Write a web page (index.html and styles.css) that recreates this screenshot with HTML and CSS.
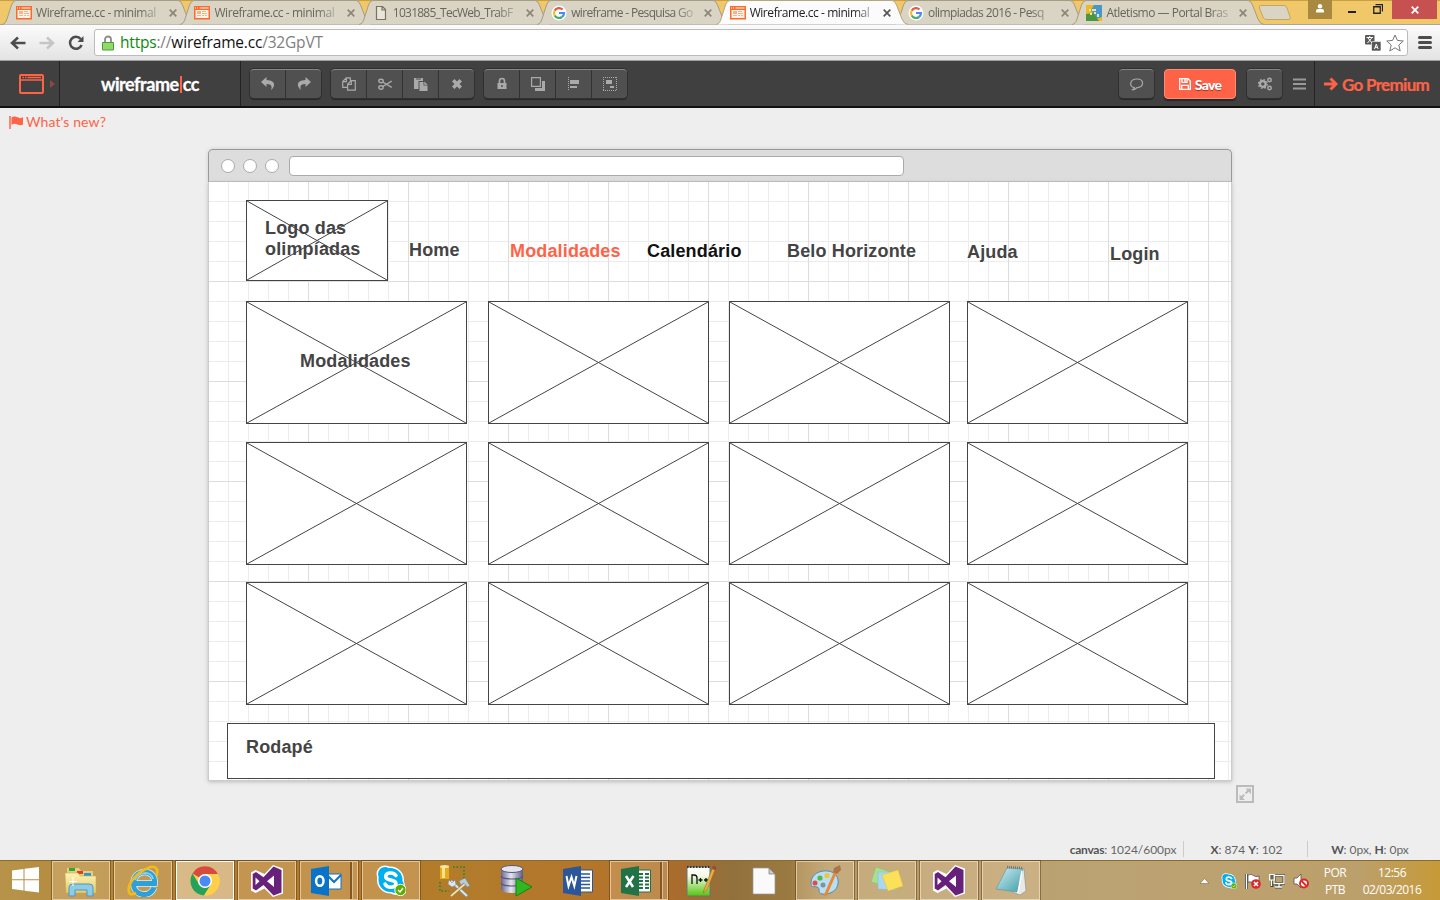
FILE: index.html
```html
<!DOCTYPE html>
<html lang="pt-BR">
<head>
<meta charset="utf-8">
<title>Wireframe.cc - minimal wireframing tool</title>
<link rel="stylesheet" href="styles.css">
</head>
<body>
<svg class="defs" width="0" height="0" aria-hidden="true">
  <defs>
    <linearGradient id="yel" x1="0" y1="0" x2="0" y2="1"><stop offset="0" stop-color="#fdf3b8"/><stop offset="1" stop-color="#e5cb62"/></linearGradient>
    <linearGradient id="blu" x1="0" y1="0" x2="0" y2="1"><stop offset="0" stop-color="#a8e6fb"/><stop offset="1" stop-color="#2a93cf"/></linearGradient>
    <linearGradient id="cyl" x1="0" y1="0" x2="1" y2="0"><stop offset="0" stop-color="#66678d"/><stop offset=".45" stop-color="#e6e6f2"/><stop offset="1" stop-color="#5b5c82"/></linearGradient>
    <linearGradient id="grn" x1="0" y1="0" x2="0" y2="1"><stop offset="0" stop-color="#fff"/><stop offset=".3" stop-color="#f4fbe8"/><stop offset="1" stop-color="#54c40c"/></linearGradient>
    <linearGradient id="pad" x1="0" y1="0" x2="1" y2="1"><stop offset="0" stop-color="#d5eef1"/><stop offset="1" stop-color="#3c9eab"/></linearGradient>
  </defs>
  <symbol id="tab-shape" viewBox="0 0 192 25"><path d="M0 24.5C3 24 4 22 5 19L9.5 5Q11 .5 14 .5H176Q179 .5 180.500 5L186 19Q188 24 192 24.500"/></symbol>
  <symbol id="fav-wire" viewBox="0 0 16 14"><path d="M0 0H16V13.500H0Z" fill="#ff6a2b"/><path d="M1.500 4H14.500V12H1.500Z" fill="#fff3ea"/><path d="M1 1.500h1v1H1zm2 0h1v1H3zm2.500 0H14.500v1h-9z" fill="#fff"/><path d="M3 5h4v3H3zM3 9h4v1H3zm5-4h4v1H8zm0 2h5v1H8zm0 2h2v1H8zm3 0h2v1h-2z" fill="#ffb184"/></symbol>
  <symbol id="fav-google" viewBox="0 0 16 16"><circle cx="8" cy="8" r="7.500" fill="#fff"/><g fill="none" stroke-width="2.200"><path d="M11.500 4.500A5 5 0 0 0 3.700 5.600" stroke="#ea5546"/><path d="M3.700 5.500A5 5 0 0 0 3.700 10.500" stroke="#f5bd24"/><path d="M3.700 10.500A5 5 0 0 0 11 12" stroke="#4aac63"/><path d="M11 12A5 5 0 0 0 13 8H8" stroke="#4b8bf4"/></g></symbol>
  <symbol id="close" viewBox="0 0 8 8"><path d="M.7.7 7.300 7.300M7.300.7.7 7.300" stroke="currentColor" stroke-width="1.700"/></symbol>
  <symbol id="box-cross" viewBox="0 0 219 121"><path d="M0 0 219 121M219 0 0 121" stroke="#444" stroke-width="1" fill="none"/></symbol>
  <symbol id="vs" viewBox="0 0 32 32"><path d="M22 0 32 3.500V28.500L22 32 13.500 23.500 4.500 28 0 25.500V7.500L4.500 5 13.500 9Z" fill="#fff"/><path d="M22.500 1.500 30.500 5V27.500L22.500 30.500 12.500 20 5 25.500 1.700 23.500V9L5 7 12.500 12.300Z" fill="#68217a"/><path d="M4.500 12.500V20L8.500 16.300ZM23 10.500V22L16 16.300Z" fill="#fff"/></symbol>
  <symbol id="skype" viewBox="0 0 30 31"><circle cx="9" cy="9" r="8.500" fill="#fff"/><circle cx="20" cy="21" r="9" fill="#fff"/><circle cx="14.500" cy="15" r="13.500" fill="#fff"/><circle cx="9" cy="9" r="7" fill="#00aff0"/><circle cx="20" cy="20.500" r="7.800" fill="#00aff0"/><circle cx="14.500" cy="15" r="12" fill="#00aff0"/><path d="M20 10.500Q18 7.500 13.500 8C9 8.500 8.500 13 12 14.300L17 15.700C22 17.500 20 22.300 15 22.300Q10.500 22.300 9 19" fill="none" stroke="#fff" stroke-width="3.500" stroke-linecap="round"/><circle cx="24.500" cy="25" r="5.700" fill="#5db000" stroke="#fff"/><path d="m22 25 2 2 3-4" stroke="#fff" fill="none" stroke-width="1.300"/></symbol>
</svg>

<header class="tabs">
  <div class="tab"><svg class="shape"><use href="#tab-shape"/></svg><svg class="fav"><use href="#fav-wire"/></svg><span class="title">Wireframe.cc - minimal</span><svg class="x"><use href="#close"/></svg></div>
  <div class="tab"><svg class="shape"><use href="#tab-shape"/></svg><svg class="fav"><use href="#fav-wire"/></svg><span class="title">Wireframe.cc - minimal</span><svg class="x"><use href="#close"/></svg></div>
  <div class="tab"><svg class="shape"><use href="#tab-shape"/></svg><svg class="fav" viewBox="0 0 16 16"><path d="M3.500 1.500h6l3 3v10h-9zM9 1.500V5h3.500" fill="#e9e5d8" stroke="#777263" stroke-width="1.200"/></svg><span class="title tight">1031885_TecWeb_TrabF</span><svg class="x"><use href="#close"/></svg></div>
  <div class="tab"><svg class="shape"><use href="#tab-shape"/></svg><svg class="fav"><use href="#fav-google"/></svg><span class="title google">wireframe - Pesquisa Go</span><svg class="x"><use href="#close"/></svg></div>
  <div class="tab active"><svg class="shape"><use href="#tab-shape"/></svg><svg class="fav"><use href="#fav-wire"/></svg><span class="title">Wireframe.cc - minimal</span><svg class="x"><use href="#close"/></svg></div>
  <div class="tab"><svg class="shape"><use href="#tab-shape"/></svg><svg class="fav"><use href="#fav-google"/></svg><span class="title olimp">olimpiadas 2016 - Pesq</span><svg class="x"><use href="#close"/></svg></div>
  <div class="tab"><svg class="shape"><use href="#tab-shape"/></svg><svg class="fav" viewBox="0 0 16 16"><path d="M0 0H16V16H0z" fill="#f0b91f"/><path d="M16 0V12L10 14 5 5 8 0z" fill="#4996c8"/><path d="M0 16V9L7 8 13 16z" fill="#4b9540"/><path d="M3 4h2v2H3zm3 0h4v2H6zm-2 4h2v2H4zm4-1h2v2H8zm3 2h2v3h-2z" fill="#e9e9a5"/></svg><span class="title portal">Atletismo — Portal Bras</span><svg class="x"><use href="#close"/></svg></div>
  <svg class="newtab" viewBox="0 0 34 18"><path d="M3 1.500H26Q28 1.500 29 4L32 12.500Q33 15.500 31 15.500H8Q6 15.500 5 13L1.500 4Q.5 1.500 3 1.500Z" fill="#d9d4c3" stroke="#c2a764"/></svg>
  <div class="winbtns">
    <span class="user"><svg width="10" height="9" viewBox="0 0 10 9"><circle cx="5" cy="2.200" r="2.200" fill="#fff"/><path d="M1 8.500V6.500Q1 5 3 5H7Q9 5 9 6.500V8.500z" fill="#fff"/></svg></span>
    <svg class="min" width="8" height="2"><path d="M0 0H8V2H0z" fill="#222"/></svg>
    <svg class="max" width="10" height="10" viewBox="0 0 10 10"><path d="M.75 2.750h6.500v6.500H.75zM2.500.5H9.500V7.500" fill="none" stroke="#222" stroke-width="1.300"/></svg>
    <span class="quit"><svg width="8" height="8"><use href="#close"/></svg></span>
  </div>
</header>

<div class="nav">
  <svg class="back" viewBox="0 0 16 14"><path d="M8 1.500 2 7 8 12.500M2 7H15.500" fill="none" stroke="#4c4c4c" stroke-width="2.500"/></svg>
  <svg class="fwd" viewBox="0 0 16 14"><path d="M8 1.500 14 7 8 12.500M14 7H.5" fill="none" stroke="#c5c5c5" stroke-width="2.500"/></svg>
  <svg class="reload" viewBox="0 0 16 16"><path d="M12.700 4A6 6 0 1 0 13.600 10" fill="none" stroke="#4c4c4c" stroke-width="2.500"/><path d="M15.500 1V7H9.500z" fill="#4c4c4c"/></svg>
  <div class="url">
    <svg class="lock" viewBox="0 0 12 16"><path d="M3 8V4.500a3 3 0 0 1 6 0V8" fill="none" stroke="#8c8c8c" stroke-width="1.800"/><path d="M.5 7.500h11v7.500H.5z" fill="#91da68" stroke="#4b9f38"/></svg>
    <span class="address"><span class="secure">https</span>://<span class="host">wireframe.cc</span>/32GpVT</span>
    <svg class="translate" viewBox="0 0 16 16"><rect width="9.500" height="9.500" rx="1" fill="#595959"/><rect x="6.500" y="6.500" width="9.500" height="9.500" rx="1" fill="#595959" stroke="#fff" stroke-width=".6"/><path d="M1.500 2.500H8M4.700 1v1.500M3 3 7 8M6.700 3 2.500 8M9.500 14l1.800-5 1.800 5M10 12.300h2.600" stroke="#fff" stroke-width="1" fill="none"/></svg>
    <svg class="star" viewBox="0 0 18 18"><path d="M9 1 11.400 6.400 17.300 7 12.800 11 14.200 17 9 13.800 3.800 17 5.200 11 .7 7 6.600 6.400Z" fill="#fff" stroke="#777" stroke-width="1"/></svg>
  </div>
  <svg class="menu" viewBox="0 0 13 13"><path d="M1 1.500H12M1 6.500H12M1 11.500H12" stroke="#4c4c4c" stroke-width="3" stroke-linecap="round"/></svg>
</div>

<div class="toolbar">
  <div class="device">
    <svg width="25" height="20" viewBox="0 0 25 20"><rect x="1" y="1" width="23" height="18" rx="1" fill="none" stroke="#ff6347" stroke-width="2"/><path d="M1 6H24M3.500 3.500h1.500M6 3.500h1.500M8.500 3.500H22" stroke="#ff6347" stroke-width="1.300"/></svg>
    <svg width="5" height="8"><path d="M0 0 5 4 0 8z" fill="#8b4a3e"/></svg>
  </div>
  <div class="brand">wireframe<i></i>cc</div>
  <div class="group g1">
    <span><svg viewBox="0 0 14 14"><path d="M5.500 0 0 5 5.500 10V7C9 6.800 11.800 8 10 13 15.500 8 13.500 3.300 5.500 3z"/></svg></span>
    <span><svg viewBox="0 0 14 14"><path d="M8.500 0 14 5 8.500 10V7C5 6.800 2.200 8 4 13-1.500 8 .5 3.300 8.500 3z"/></svg></span>
  </div>
  <div class="group g2">
    <span><svg viewBox="0 0 14 14"><path d="M5 10.300H.7V4.500L4.300.9H8.300V3.500M.7 4.600H4.400V.9M5.600 7.200 9.200 3.600H13.300V13.200H5.600zM5.600 7.300H9.300V3.600" fill="none" stroke="#aaa" stroke-width="1.200"/></svg></span>
    <span><svg viewBox="0 0 14 14"><g fill="none" stroke="#aaa" stroke-width="1.400"><ellipse cx="3" cy="4" rx="2.200" ry="1.700"/><ellipse cx="3" cy="10.500" rx="2.200" ry="1.700"/><path d="M4.700 5 13.700 10.500M4.700 9.500 13.700 4"/></g></svg></span>
    <span><svg viewBox="0 0 14 14"><path d="M0 1H9V4H4.500V12H0zM5.500 5H9.500V8.500H13.500V14H5.500zM10.300 4.500 13.700 7.700H10.300z"/><path d="M2 2h5" stroke="#505050"/></svg></span>
    <span><svg viewBox="0 0 14 14"><path d="m2 4.500 2.500-2.500L7 4.500 9.500 2 12 4.500 9.500 7 12 9.500 9.500 12 7 9.500 4.500 12 2 9.500 4.500 7z"/></svg></span>
  </div>
  <div class="group g3">
    <span><svg viewBox="0 0 14 14"><path d="M4.500 7V4a2.500 2.500 0 0 1 5 0V7" fill="none" stroke="#aaa" stroke-width="1.700"/><path d="M2.500 6h9v6h-9z"/><path d="M7 8v2" stroke="#505050" stroke-width="1.500"/></svg></span>
    <span><svg viewBox="0 0 14 14"><path d="M.6.6h8.800v8.800H.6z" fill="none" stroke="#aaa" stroke-width="1.200"/><path d="M11 4h3v10H4v-3h7z"/></svg></span>
    <span><svg viewBox="0 0 14 14"><path d="M1.500 0v14" stroke="#aaa" stroke-dasharray="1 1"/><path d="M3 3h9v4H3zm0 6h7v2H3z"/></svg></span>
    <span><svg viewBox="0 0 14 14"><path d="M.5 0V14M13.500 0V14M0 .5H14M0 13.500H14" fill="none" stroke="#aaa" stroke-dasharray="1 1"/><path d="M3 3h6v4H3zm4 6h4v2H7z"/></svg></span>
  </div>
  <div class="group solo"><span><svg viewBox="0 0 14 14"><path d="M4.300 10.700C-1.500 9 0 2 7 2S15 9.800 6.500 10.800C5.500 12.300 3 13 2.500 12.700Q4.200 12 4.300 10.700Z" fill="none" stroke="#aaa" stroke-width="1.200"/></svg></span></div>
  <div class="save"><svg width="12" height="12" viewBox="0 0 12 12"><path d="M.7.7H9L11.300 3V11.300H.7zM3 .7V4.300H8V.7M2.700 11.300V7.300H9.300V11.300M6 1v3" fill="none" stroke="#fff" stroke-width="1.300"/></svg>Save</div>
  <div class="group solo gears"><span><svg viewBox="0 0 14 14"><g fill="none" stroke="#aaa"><circle cx="4.800" cy="7" r="2.800" stroke-width="2.200"/><circle cx="4.800" cy="7" r="4.300" stroke-dasharray="1.700 1.680" stroke-width="1.500"/><circle cx="11.500" cy="3" r="1.700" stroke-width="1.500"/><circle cx="11.500" cy="11" r="1.700" stroke-width="1.500"/></g></svg></span></div>
  <svg class="burger" width="13" height="12"><path d="M0 1.500H13M0 6H13M0 10.500H13" stroke="#999" stroke-width="1.800"/></svg>
  <div class="premium"><svg width="14" height="14" viewBox="0 0 14 14"><path d="M0 7H12M6.500 1.500 12 7 6.500 12.500" fill="none" stroke="#ff6347" stroke-width="3"/></svg>Go Premium</div>
</div>

<main class="workspace">
  <div class="whatsnew"><svg width="15" height="13" viewBox="0 0 15 13"><path d="M1 0V13" stroke="#ff6347" stroke-width="1.500"/><path d="M2.500 1.500Q5.500-.5 8.500 1.300T14 1V8.500Q11.500 10 8.500 8.500T2.500 9z" fill="#ff6347"/></svg>What's new?</div>
  <div class="window">
    <div class="titlebar"><i></i><i></i><i></i><b></b></div>
    <div class="canvas">
      <div class="logo box"><svg viewBox="0 0 140 79"><path d="M0 0 140 79M140 0 0 79" stroke="#444" fill="none"/></svg></div>
      <span class="label logo-label">Logo das<br>olimpíadas</span>
      <span class="label home">Home</span>
      <span class="label modalidades">Modalidades</span>
      <span class="label calendario">Calendário</span>
      <span class="label belo">Belo Horizonte</span>
      <span class="label ajuda">Ajuda</span>
      <span class="label login">Login</span>
      <div class="cards">
        <div class="box"><svg><use href="#box-cross"/></svg></div><div class="box"><svg><use href="#box-cross"/></svg></div><div class="box"><svg><use href="#box-cross"/></svg></div><div class="box"><svg><use href="#box-cross"/></svg></div>
        <div class="box"><svg><use href="#box-cross"/></svg></div><div class="box"><svg><use href="#box-cross"/></svg></div><div class="box"><svg><use href="#box-cross"/></svg></div><div class="box"><svg><use href="#box-cross"/></svg></div>
        <div class="box"><svg><use href="#box-cross"/></svg></div><div class="box"><svg><use href="#box-cross"/></svg></div><div class="box"><svg><use href="#box-cross"/></svg></div><div class="box"><svg><use href="#box-cross"/></svg></div>
      </div>
      <span class="label card-label">Modalidades</span>
      <div class="footer-box box"></div>
      <span class="label rodape">Rodapé</span>
    </div>
    <svg class="resize" viewBox="0 0 18 18"><rect x="1" y="1" width="16" height="16" fill="none" stroke="#bbb" stroke-width="2"/><path d="M9.500 3.500H15V9zM3.500 9.500V15H9z" fill="#bbb"/><path d="M5 13 13 5" stroke="#bbb" stroke-width="2" stroke-dasharray="4.500 2"/></svg>
  </div>
  <div class="status"><span class="s1"><b>canvas</b>: 1024/600px</span><span class="s2"><b>X</b>: 874 <b>Y</b>: 102</span><span class="s3"><b>W</b>: 0px, <b>H</b>: 0px</span></div>
</main>

<footer class="taskbar">
  <div class="start"><svg width="28" height="26" viewBox="0 0 28 26"><path d="M0 3.500 11.500 2V12.300H0zM12.500 1.800 27 0V12.300H12.500zM0 13.300H11.500V23.500L0 22zM12.500 13.300H27V25.500L12.500 23.700z" fill="#fff"/></svg></div>
  <div class="task open"><svg width="34" height="32" viewBox="0 0 34 32"><path d="M3 3h12l2 3h12v19H3z" fill="#e8cf77"/><path d="M5 3h6v3H5z" fill="#2ca93c"/><path d="M13 6h6v3h-6z" fill="#d8402c"/><path d="M20 8h7v3h-7z" fill="#2b98d6"/><path d="M1 8h13l2 3h16V28H2z" fill="url(#yel)" stroke="#c9ad55" stroke-width=".6"/><path d="M5 31V22q0-3 4-3H25q4 0 4 3v9h-6V25H11v6z" fill="#8ecbe6" stroke="#4b99c4"/><path d="M9 12v9M5 16.500h8" stroke="#fff"/></svg></div>
  <div class="task open"><svg width="34" height="32" viewBox="0 0 34 32"><path d="M7 18.500H28.500C30 4 10 3 7.500 16.500 6 31 24 34 28 22.500" fill="none" stroke="#d8f2fb" stroke-width="6.500"/><path d="M7 18.500H28.500C30 4 10 3 7.500 16.500 6 31 24 34 28 22.500" fill="none" stroke="#2f9fd8" stroke-width="5"/><path d="M27 14C26 6 12 6 9 15" fill="none" stroke="#7fd4f4" stroke-width="2"/><path d="M30.500 11C33 3 29-1 20 4 9 9 1 20 3 27Q4 31 10 28" fill="none" stroke="#f3bb19" stroke-width="2.700"/></svg></div>
  <div class="task open current"><svg width="30" height="30" viewBox="0 0 30 30"><circle cx="15" cy="15" r="14.500" fill="#fc4"/><path d="M15 15 2.500 7.500A14.500 14.500 0 0 1 27.800 8H15z" fill="#d84a3e"/><path d="M2.500 7.500A14.500 14.500 0 0 0 14 29.500L21 18.500 9 18z" fill="#25a15a"/><path d="M21 18.500 14 29.500A14.500 14.500 0 0 0 27.800 8H15z" fill="#fed04a"/><circle cx="15" cy="15" r="7" fill="#fff"/><circle cx="15" cy="15" r="5.500" fill="#4b8af4"/></svg></div>
  <div class="task open"><svg width="32" height="32"><use href="#vs"/></svg></div>
  <div class="task open stack"><svg width="32" height="30" viewBox="0 0 32 30"><path d="M17 8H31V23H17z" fill="#fff" stroke="#0f72c5"/><path d="m17 9 7 7 7-7" fill="none" stroke="#0f72c5" stroke-width="2"/><path d="M1 3 19 0V30L1 27z" fill="#0873c9"/><ellipse cx="9.800" cy="15" rx="3.700" ry="4.800" fill="none" stroke="#fff" stroke-width="2.500"/></svg></div>
  <div class="task open"><svg width="30" height="31"><use href="#skype"/></svg></div>
  <div class="task"><svg width="32" height="32" viewBox="0 0 32 32"><path d="M2 1h9v13H2z" fill="#e9a91b"/><path d="M4 2h3v11H4z" fill="#ffe68a"/><ellipse cx="6.500" cy="1.500" rx="4.500" ry="1.500" fill="#fbe7a6"/><path d="M15 2H26V13M2 17v9h9" fill="none" stroke="#16862c" stroke-width="1.500" stroke-dasharray="1.500 2"/><path d="m13 16 16 15" stroke="#7c8c99" stroke-width="3.500"/><path d="m13 16 16 15" stroke="#dce6ee" stroke-width="2"/><path d="m28 18-15 13" stroke="#8b7442" stroke-width="3"/><path d="m28 18-15 13" stroke="#f1dfaa" stroke-width="2"/><path d="m21 16 6-3 5 8-3 1-3-4-3 2z" fill="#b8ccdc" stroke="#70899a" stroke-width=".5"/><path d="m11 15 3 3 3-3 1 5-4 2-4-3z" fill="#dfe8ee" stroke="#70899a" stroke-width=".5"/></svg></div>
  <div class="task"><svg width="32" height="32" viewBox="0 0 32 32"><path d="M1 4V24Q1 28 12 28T23 24V4z" fill="url(#cyl)"/><ellipse cx="12" cy="4" rx="11" ry="3.500" fill="#e4e4ee" stroke="#55567c"/><path d="M1 11q1 3 11 3t11-3M1 18q1 3 11 3t11-3" fill="none" stroke="#56577e" stroke-width="1.200"/><path d="M16 13 32 22 16 31z" fill="#2eb720" stroke="#168311"/></svg></div>
  <div class="task"><svg width="32" height="30" viewBox="0 0 32 30"><path d="M17 4H30.500V26H17z" fill="#fff" stroke="#2b579a"/><path d="M19 8h9m-9 3.500h9M19 15h9m-9 3.500h9M19 22h9" stroke="#2b579a" stroke-width="1.500"/><path d="M1 3 19 0V30L1 27z" fill="#2b579a"/><path d="m4.500 10 2 10L9.500 11l2.800 9 2.200-10" fill="none" stroke="#fff" stroke-width="2"/></svg></div>
  <div class="task open stack"><svg width="32" height="30" viewBox="0 0 32 30"><path d="M17 4H30.500V26H17z" fill="#fff" stroke="#217346"/><path d="M19 8h4m2 0h4m-10 3.500h4m2 0h4M19 15h4m2 0h4m-10 3.500h4m2 0h4M19 22h4m2 0h4" stroke="#217346" stroke-width="2"/><path d="M1 3 19 0V30L1 27z" fill="#217346"/><path d="m6 10 7 11M13.500 10 6 21" stroke="#fff" stroke-width="2.500"/></svg></div>
  <div class="task npp"><svg width="32" height="32" viewBox="0 0 32 32"><path d="M3 2H26V31H3z" fill="url(#grn)" stroke="#677"/><path d="M3 2h23" stroke="#333" stroke-dasharray="1.500 1.500" stroke-width="2"/><path d="M8 19V10h2q3 0 3 3v6M14.500 15h4m-2-2v4M20 15h4m-2-2v4" fill="none" stroke="#111" stroke-width="1.300"/><path d="m20 25 8-21 3 1-8 20-4 3z" fill="#ecae3c" stroke="#9b6926" stroke-width=".6"/><path d="m28 3 1-2 4 1-1 3z" fill="#a3413e"/></svg></div>
  <div class="task"><svg width="24" height="28" viewBox="0 0 24 28"><path d="M1 1H17L23 7V27H1z" fill="#fafafa" stroke="#999" stroke-width=".7"/><path d="M17 1V7H23z" fill="#ccc" stroke="#777" stroke-width=".7"/></svg></div>
  <div class="task open"><svg width="34" height="32" viewBox="0 0 34 32"><path d="M3 18C3 9 12 5 20 6s11 7 10 13c-1 7-9 11-16 10-5-1-1-6-5-7-3-1-6 1-6-4Z" fill="#b9dff3" stroke="#5388b0"/><circle cx="7" cy="18" r="2.500" fill="#e44c43"/><circle cx="12" cy="13" r="2.600" fill="#55b845"/><circle cx="19" cy="10.500" r="2.600" fill="#f5c52b"/><circle cx="15" cy="20" r="2.500" fill="#7e95a0"/><path d="M28 6 17 31" stroke="#eb8831" stroke-width="3"/><path d="m26 3 6-3 1 5-4 4-4-2z" fill="#ad7547"/></svg></div>
  <div class="task open"><svg width="32" height="28" viewBox="0 0 32 28"><path d="m5 0 14 5-4 14L0 15z" fill="#a6df91" stroke="#82c16e" stroke-width=".5"/><path d="m7 5 15 0 2 18-17-1z" fill="#a9d9ef" stroke="#7fb8d5" stroke-width=".5"/><path d="m11 8 16-5 5 16-15 5z" fill="#fbe15a" stroke="#dfc03b" stroke-width=".5"/></svg></div>
  <div class="task open"><svg width="32" height="32"><use href="#vs"/></svg></div>
  <div class="task open"><svg width="32" height="32" viewBox="0 0 32 32"><path d="m12 3 17 1 2 22-6 4-8-3z" fill="#e6e9e8" stroke="#8c8c84" stroke-width=".6"/><path d="M12 3 28 4 22 27 1 24z" fill="url(#pad)" stroke="#5793a0" stroke-width=".6"/><path d="m27 6-4 22" stroke="#fff" stroke-width="1.500"/><path d="m12 2 16 1" stroke="#777" stroke-width="2.500" stroke-dasharray="1 1"/></svg></div>
  <div class="tray">
    <svg class="up" width="9" height="6"><path d="M0 5.500 4.500.5 9 5.500z" fill="#fff" stroke="#665838" stroke-width=".5"/></svg>
    <svg width="16" height="16"><use href="#skype"/></svg>
    <svg width="16" height="16" viewBox="0 0 16 16"><path d="M1.500 1V16" stroke="#333" stroke-width="3"/><path d="M1.500 1V16" stroke="#fff" stroke-width="1.500"/><path d="M3 2Q6 .5 8.500 2.500T14 3V9H3z" fill="#fff" stroke="#444" stroke-width=".7"/><circle cx="11" cy="11" r="4.800" fill="#db2828"/><path d="m9 9 4 4m0-4-4 4" stroke="#fff" stroke-width="1.600"/></svg>
    <svg width="16" height="16" viewBox="0 0 16 16"><path d="M5 2.500H15V10.500H5zM10 11v3M6 14h7M3 7v7" fill="none" stroke="#443" stroke-width="3"/><path d="M5 2.500H15V10.500H5zM10 11v3M6 14h7M2.500 7v6" fill="none" stroke="#fff" stroke-width="1.300"/><path d="M.7 1.500h4.500V7H.7z" fill="#665" stroke="#fff" stroke-width="1.200"/></svg>
    <svg width="16" height="16" viewBox="0 0 16 16"><path d="M1 5H4L8 1V15L4 11H1z" fill="#fff" stroke="#554" stroke-width=".8"/><circle cx="11" cy="10.500" r="4" fill="#fff" stroke="#db2828" stroke-width="1.900"/><path d="m8.500 8 5 5" stroke="#db2828" stroke-width="1.900"/></svg>
    <div class="lang">POR<br>PTB</div>
    <div class="clock">12:56<br>02/03/2016</div>
  </div>
</footer>
</body>
</html>
```

FILE: styles.css
```css
* { box-sizing: border-box; }
body { margin: 0; width: 1440px; height: 900px; overflow: hidden; background: #eee; font-family: "Lato", sans-serif; display: flex; flex-direction: column; }
svg { display: block; flex: none; }
.defs { position: absolute; }

/* Browser tab strip */
.tabs { height: 25px; flex: none; display: flex; background: #f0c869; border-top: 1px solid #c9a04a; border-bottom: 1px solid #a5a5a5; padding-left: 2px; font: 12px "Open Sans", sans-serif; }
.tab { position: relative; width: 192px; height: 25px; margin: -1px -13.600px -1px 0; padding: 0 17px 0 14px; display: flex; align-items: center; flex: none; color: #68655d; }
.shape { position: absolute; left: 0; top: 0; width: 192px; height: 25px; fill: #d9d4c4; stroke: #a69c83; }
.active { z-index: 2; color: #222; }
.active .shape { fill: #fbfbfb; stroke: #b5a67d; }
.fav { position: relative; width: 16px; height: 16px; margin-top: 1px; }
.title { position: relative; margin-left: 4px; width: 125px; white-space: nowrap; letter-spacing: -.43px; line-height: 20px; margin-top: 1px; -webkit-mask-image: linear-gradient(90deg, #000 83%, rgba(0,0,0,.25)); mask-image: linear-gradient(90deg, #000 83%, rgba(0,0,0,.25)); }
.tight { letter-spacing: -.75px; }
.google { letter-spacing: -.65px; }
.olimp { letter-spacing: -.6px; }
.portal { letter-spacing: -.5px; }
.x { position: relative; width: 8px; height: 8px; margin-left: 9px; margin-top: 1px; color: #8b8679; }
.active .x { color: #555; }
.newtab { width: 34px; height: 18px; margin: 3px 0 0 7px; }
.winbtns { display: flex; margin-left: auto; padding-right: 3px; margin-top: -1px; }
.user { width: 24px; height: 19px; background: #a9883f; display: flex; justify-content: center; padding-top: 4px; }
.min { margin: 11px 0 0 16px; }
.max { margin: 4px 0 0 17px; }
.quit { width: 45px; height: 19px; margin-left: 9px; background: #c75050; color: #fff; display: flex; align-items: center; justify-content: center; }

/* Address row */
.nav { height: 36px; flex: none; display: flex; align-items: center; background: linear-gradient(#fbfbfb, #e3e3e3); border-bottom: 1px solid #a0a0a0; padding: 0 8px 0 10px; }
.back { width: 16px; height: 14px; }
.fwd { width: 16px; height: 14px; margin-left: 13px; }
.reload { width: 16px; height: 16px; margin-left: 13px; }
.url { width: 1314px; flex: none; height: 27px; margin-left: 10px; background: #fff; border: 1px solid #bbb; border-radius: 3px; display: flex; align-items: center; padding: 0 3px 0 7px; }
.lock { width: 12px; height: 16px; }
.address { margin-left: 6px; flex: 1; font: 15.500px/24px "Open Sans", sans-serif; letter-spacing: -.19px; color: #808080; position: relative; top: -1px; }
.secure { color: #0b8a0b; }
.host { color: #111; }
.translate { width: 16px; height: 16px; }
.star { width: 18px; height: 18px; margin-left: 5px; }
.menu { width: 14px; height: 13px; margin-left: 10px; }

/* Application toolbar */
.toolbar { height: 47px; flex: none; display: flex; background: #404040; border-bottom: 2px solid #111; }
.device { width: 60px; display: flex; align-items: center; gap: 6px; padding: 1px 0 0 19px; border-right: 1px solid #222; }
.brand { width: 181px; display: flex; justify-content: center; align-items: center; color: #fff; font-size: 18px; font-weight: 700; letter-spacing: -.45px; border-right: 1px solid #222; padding-top: 1px; -webkit-text-stroke: .3px #fff; }
.brand i { width: 2px; height: 17px; background: #ff6347; margin: 0 1px; }
.group { height: 29px; margin-top: 8px; display: flex; background: #505050; border-radius: 4px; border-top: 1px solid #888; box-shadow: 0 0 0 1px #303030, 0 2px 1px #292929; }
.group span { flex: 1; display: flex; align-items: center; justify-content: center; }
.group span + span { border-left: 1px solid #333; }
.group svg { width: 14px; height: 14px; fill: #aaa; }
.g1 { margin-left: 9px; width: 71px; }
.g2 { margin-left: 10px; width: 143px; }
.g3 { margin-left: 10px; width: 143px; }
.solo { margin-left: 492px; width: 35px; }
.save { width: 72px; height: 30px; margin: 8px 0 0 10px; background: #ff6347; border: 1px solid #ff8b76; border-radius: 4px; box-shadow: 0 2px 1px #292929; display: flex; align-items: center; justify-content: center; gap: 4px; color: #fff; font-size: 14px; font-weight: 900; letter-spacing: -.75px; text-shadow: 0 1px 1px #9a3626; }
.gears { margin-left: 11px; }
.burger { margin: 17px 0 0 11px; }
.premium { margin-left: 8px; border-left: 1px solid #222; padding: 1px 0 0 9px; display: flex; align-items: center; gap: 4px; color: #ff6347; font-size: 17px; font-weight: 700; letter-spacing: -.7px; white-space: nowrap; -webkit-text-stroke: .2px #ff6347; }

/* Workspace */
.workspace { height: 752px; flex: none; display: flex; flex-direction: column; }
.whatsnew { height: 41px; display: flex; gap: 2px; padding: 5px 0 0 9px; color: #ff6347; font-size: 14px; letter-spacing: .1px; line-height: 17px; flex: none; }
.whatsnew svg { margin-top: 3px; }
.window { position: relative; width: 1024px; height: 632px; margin-left: 208px; flex: none; }
.titlebar { height: 33px; display: flex; align-items: center; gap: 8px; background: #ddd; border: 1px solid #999; border-bottom-color: #bbb; border-radius: 5px 5px 0 0; padding-left: 12px; box-shadow: 0 0 4px #ccc; }
.titlebar i { width: 14px; height: 14px; border-radius: 50%; background: #fff; border: 1px solid #aaa; }
.titlebar b { width: 615px; height: 20px; margin-left: 2px; background: #fff; border: 1px solid #aaa; border-radius: 4px; }
.canvas { position: relative; height: 599px; border: solid #ccc; border-width: 0 1px 1px; box-shadow: 0 1px 4px #bbb; background:
  repeating-linear-gradient(90deg, transparent 0 99px, #ddd 99px 100px),
  repeating-linear-gradient(transparent 0 99px, #ddd 99px 100px),
  repeating-linear-gradient(90deg, transparent 0 19px, #ececec 19px 20px),
  repeating-linear-gradient(transparent 0 19px, #ececec 19px 20px), #fff; }
.box { background: #fff; border: 1px solid #444; }
.box svg { width: 100%; height: 100%; }
.logo { position: absolute; left: 37px; top: 18px; width: 142px; height: 81px; }
.cards { position: absolute; left: 37px; top: 119px; display: grid; grid-template-columns: 242px 241px 238px 221px; grid-template-rows: 141px 140px 123px; }
.cards .box { width: 221px; height: 123px; }
.footer-box { position: absolute; left: 18px; top: 541px; width: 988px; height: 56px; }
.label { position: absolute; font: bold 18px/21px "Liberation Sans", Arial, sans-serif; letter-spacing: .15px; color: #444; white-space: nowrap; }
.logo-label { left: 56px; top: 36px; }
.home { left: 200px; top: 58px; }
.modalidades { left: 301px; top: 59px; color: #ff6347; }
.calendario { left: 438px; top: 59px; color: #111; }
.belo { left: 578px; top: 59px; }
.ajuda { left: 758px; top: 60px; }
.login { left: 901px; top: 62px; }
.card-label { left: 91px; top: 169px; }
.rodape { left: 37px; top: 555px; }
.resize { position: absolute; left: 1028px; top: 636px; width: 18px; height: 18px; }
.status { display: flex; justify-content: flex-end; margin-top: auto; height: 20px; font-size: 12px; line-height: 20px; color: #666; }
.status b { color: #555; letter-spacing: -.25px; }
.status span { text-align: center; height: 16px; line-height: 17px; margin-top: 1px; letter-spacing: -.05px; }
.s1 { width: 121px; border-right: 1px solid #ccc; padding-right: 0; }
.s2 { width: 124px; border-right: 1px solid #ccc; padding-left: 2px; }
.s3 { width: 132px; padding-right: 8px; }

/* Taskbar */
.taskbar { height: 40px; flex: none; display: flex; gap: 2px; border-top: 1px solid #8b6a30; background: linear-gradient(90deg, #b7934a 0, #b08234 150px, #b27a2c 330px, #b27c2b 450px, #b4752b 600px, #a86c2d 680px, #92703c 730px, #9b7a41 790px, #b49967 830px, #bca374 1100px, #bca06b 1360px, #c79a38 1440px); }
.start { width: 50px; padding: 6px 0 0 12px; }
.task { position: relative; width: 60px; height: 39px; display: flex; align-items: center; justify-content: center; flex: none; }
.open { width: 58px; margin-right: 2px; background: rgba(255,230,190,.23); border: 1px solid rgba(255,241,215,.55); box-shadow: 0 0 0 1px rgba(90,55,15,.5); }
.current { background: rgba(255,242,222,.5); border-color: #fff; }
.stack::after { content: ""; position: absolute; top: 0; bottom: 0; right: 4px; width: 2px; background: #835723; border-right: 1px solid #d8bd91; }
.stack svg { margin-right: 6px; }
.npp svg { margin-right: 4px; }
.tray { margin-left: auto; padding-right: 18px; display: flex; align-items: center; gap: 8px; color: #fff; font: 12px/17px "Open Sans", sans-serif; letter-spacing: -.5px; text-align: center; }
.up { margin-right: 4px; }
.lang { width: 24px; margin-left: 6px; }
.clock { width: 60px; margin-left: 7px; }
```
